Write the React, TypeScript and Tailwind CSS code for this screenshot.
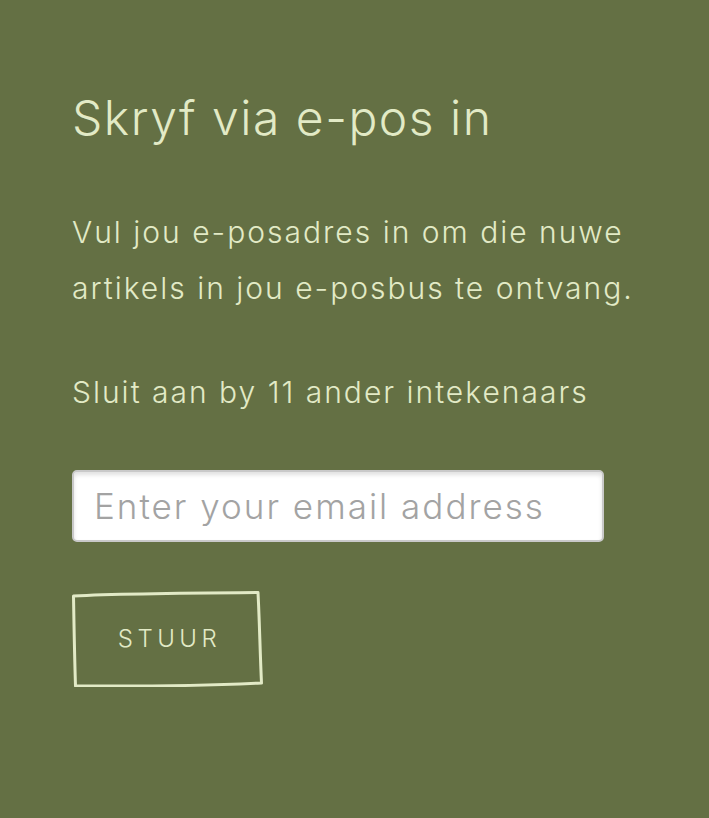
export default function App() {
  return (
    <div className="min-h-[818px] bg-[#647044] px-[72px] pt-[88px] text-[#e2eac6] font-['Inter','Liberation_Sans',sans-serif] font-light">
      <h2 className="text-[48px] leading-[60px] font-light tracking-[1.5px]">Skryf via e-pos in</h2>

      <p className="mt-[56px] text-[30px] leading-[56px] tracking-[2px]">
        Vul jou e-posadres in om die nuwe artikels in jou e-posbus te ontvang.
      </p>

      <p className="mt-[48px] text-[30px] leading-[56px] tracking-[2px]">
        Sluit aan by 11 ander intekenaars
      </p>

      <div className="mt-[50px] w-[532px]">
        <input
          type="email"
          placeholder="Enter your email address"
          className="w-full h-[72px] rounded-[5px] border-2 border-[#c9c9c9] bg-white px-[20px] text-[35px] tracking-[2px] text-gray-700 placeholder:text-[#a3a3a3] shadow-[inset_0_3px_4px_rgba(0,0,0,0.12)] outline-none font-light"
        />
      </div>

      <button className="relative mt-[49px] flex h-[96px] w-[191px] items-center justify-center pl-[4px] text-[24px] tracking-[4.5px] text-[#e2eac6]">
        STUUR
        <svg className="absolute inset-0 h-full w-full" viewBox="0 0 191 96" fill="none">
          <path
            d="M1.5 5 C40 3, 120 2, 186 1.5 C187.5 30, 188 60, 189.5 92 C150 94, 80 95.5, 3.5 95 C2.5 65, 2 35, 1.5 5 Z"
            stroke="#e2eac6"
            strokeWidth="3"
            strokeLinejoin="round"
          />
        </svg>
      </button>
    </div>
  );
}
